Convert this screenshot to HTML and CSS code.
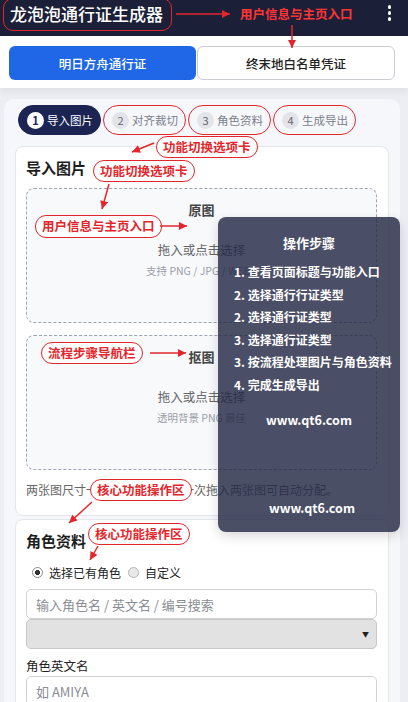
FILE: index.html
```html
<!DOCTYPE html>
<html lang="zh-CN">
<head>
  <meta charset="UTF-8">
  <meta name="viewport" content="width=device-width, initial-scale=1.0">
  <title>龙泡泡通行证生成器</title>
  <link rel="stylesheet" href="styles.css">
</head>
<body>
  <!-- Top bar -->
  <header class="topbar">
    <h1 class="app-title">龙泡泡通行证生成器</h1>
    <button class="menu-btn" aria-label="菜单"><span></span><span></span><span></span></button>
  </header>

  <!-- Pass type tabs -->
  <nav class="pass-tabs">
    <button class="pass-tab active">明日方舟通行证</button>
    <button class="pass-tab">终末地白名单凭证</button>
  </nav>

  <main class="panel">
    <!-- Step navigation -->
    <ol class="steps">
      <li class="step current"><span class="step-num">1</span>导入图片</li>
      <li class="step"><span class="step-num">2</span>对齐裁切</li>
      <li class="step"><span class="step-num">3</span>角色资料</li>
      <li class="step"><span class="step-num">4</span>生成导出</li>
    </ol>

    <section class="card">
      <h2 class="card-title">导入图片</h2>
      <div class="dropzone">
        <div class="drop-label">原图</div>
        <div class="drop-action">拖入或点击选择</div>
        <div class="drop-note">支持 PNG / JPG / WEBP</div>
      </div>
      <div class="dropzone">
        <div class="drop-label">抠图</div>
        <div class="drop-action">拖入或点击选择</div>
        <div class="drop-note">透明背景 PNG 最佳</div>
      </div>
      <p class="hint">两张图尺寸一致时效果最佳；一次拖入两张图可自动分配。</p>
    </section>

    <section class="card">
      <h2 class="card-title">角色资料</h2>
      <div class="radio-row">
        <label class="radio-label"><input type="radio" name="mode" class="radio" checked>选择已有角色</label>
        <label class="radio-label"><input type="radio" name="mode" class="radio">自定义</label>
      </div>
      <input type="text" class="field search" placeholder="输入角色名 / 英文名 / 编号搜索">
      <div class="select-wrap">
        <select class="field select"><option></option></select>
      </div>
      <label class="field-label">角色英文名</label>
      <input type="text" class="field" placeholder="如 AMIYA">
    </section>
  </main>

  <!-- Guide popup -->
  <aside class="guide">
    <h3 class="guide-title">操作步骤</h3>
    <ul class="guide-steps">
      <li>1. 查看页面标题与功能入口</li>
      <li>2. 选择通行行证类型</li>
      <li>2. 选择通行证类型</li>
      <li>3. 选择通行证类型</li>
      <li>3. 按流程处理图片与角色资料</li>
      <li>4. 完成生成导出</li>
    </ul>
    <div class="guide-site">www.qt6.com</div>
    <div class="guide-site bottom">www.qt6.com</div>
  </aside>

  <!-- Annotations -->
  <div class="title-ring"></div>
  <div class="header-note">用户信息与主页入口</div>
  <div class="note note-tabs1">功能切换选项卡</div>
  <div class="note note-tabs2">功能切换选项卡</div>
  <div class="note note-user">用户信息与主页入口</div>
  <div class="note note-flow">流程步骤导航栏</div>
  <div class="note note-core1">核心功能操作区</div>
  <div class="note note-core2">核心功能操作区</div>

  <svg class="arrows" width="408" height="702" viewBox="0 0 408 702">
    <defs>
      <marker id="ah" viewBox="0 0 10 10" refX="10" refY="5" markerWidth="9" markerHeight="8" markerUnits="userSpaceOnUse" orient="auto">
        <path d="M0 0L10 5L0 10z" fill="#e3262c"/>
      </marker>
    </defs>
    <g stroke="#e3262c" stroke-width="1.5" fill="none" marker-end="url(#ah)">
      <line x1="176" y1="14" x2="230" y2="14"/>
      <line x1="292" y1="25" x2="292" y2="48"/>
      <line x1="154" y1="143" x2="132" y2="152"/>
      <line x1="109" y1="184" x2="102" y2="209"/>
      <line x1="160" y1="226" x2="187" y2="226"/>
      <line x1="150" y1="353" x2="186" y2="353"/>
      <line x1="92" y1="502" x2="69" y2="523"/>
      <line x1="98" y1="546" x2="90" y2="560"/>
    </g>
  </svg>
</body>
</html>
```

FILE: styles.css
```css
* {
  box-sizing: border-box;
}

body {
  margin: 0;
  width: 408px;
  height: 702px;
  overflow: hidden;
  position: relative;
  background-color: #eceef3;
  font-family: "Noto Sans CJK SC", "Noto Sans", sans-serif;
  color: #222;
}

/* top bar */
.topbar {
  height: 36px;
  background-color: #1c1f38;
  display: flex;
  align-items: flex-start;
  justify-content: space-between;
  padding: 0 17px 0 10px;
}

.app-title {
  margin: 0;
  font-size: 17px;
  font-weight: 500;
  line-height: 28px;
  color: #fff;
}

.menu-btn {
  margin-top: 5px;
  padding: 0;
  border: 0;
  background: none;
  display: flex;
  flex-direction: column;
  gap: 2.5px;
}

.menu-btn span {
  width: 3.5px;
  height: 3.5px;
  border-radius: 50%;
  background-color: #fff;
}

/* pass tabs */
.pass-tabs {
  position: relative;
  background-color: #fff;
  display: flex;
  padding: 10px 13px 8px 9px;
  box-shadow: 0 3px 8px rgba(20, 30, 60, 0.07);
}

.pass-tab {
  height: 34px;
  border-radius: 6px;
  font-family: inherit;
  font-size: 12.5px;
  font-weight: 500;
}

.pass-tab.active {
  flex: 0 0 187px;
  border: 0;
  background-color: #1f67e6;
  color: #fff;
}

.pass-tab:not(.active) {
  flex: 1;
  margin-left: 1px;
  border: 1px solid #c9ccd2;
  background-color: #fff;
  color: #222;
}

/* main panel */
.panel {
  margin: 11px 8px 0 4px;
  padding: 6px 11px 20px;
  background-color: #f6f7fa;
  border-radius: 10px;
}

.steps {
  list-style: none;
  margin: 0 0 11px;
  padding: 0 0 0 3px;
  display: flex;
  gap: 2px;
}

.step {
  height: 30px;
  border-radius: 15px;
  border: 1.5px solid #e3262c;
  display: flex;
  align-items: center;
  gap: 3px;
  padding: 0 7px 0 8px;
  font-size: 11.5px;
  color: #7a7f8c;
}

.step.current {
  background-color: #1b2452;
  border-color: #1b2452;
  color: #fff;
}

.step-num {
  width: 17px;
  height: 17px;
  border-radius: 50%;
  background-color: #e2e4ea;
  color: #666;
  display: flex;
  align-items: center;
  justify-content: center;
  font-size: 11px;
}

.step.current .step-num {
  background-color: #fff;
  color: #1b2452;
  font-weight: 700;
}

.card {
  background-color: #fff;
  border: 1px solid #e4e6ec;
  border-radius: 8px;
  padding: 10px 11px 16px 10px;
}

.card + .card {
  margin-top: 3px;
}

.card-title {
  margin: 0 0 9px;
  font-size: 15px;
  line-height: 22px;
  font-weight: 700;
  color: #1e1e1e;
}

.dropzone {
  height: 135px;
  border: 1.5px dashed #9ea4b3;
  border-radius: 8px;
  background-color: #f8f9fb;
  display: flex;
  flex-direction: column;
  align-items: center;
  padding-top: 11px;
}

.dropzone + .dropzone {
  margin-top: 12px;
}

.drop-label {
  font-size: 13px;
  font-weight: 700;
  line-height: 20px;
  color: #444;
}

.drop-action {
  margin-top: 21px;
  font-size: 12.5px;
  line-height: 18px;
  color: #666;
}

.drop-note {
  margin-top: 4px;
  font-size: 10.5px;
  line-height: 16px;
  color: #9a9ea8;
}

.hint {
  margin: 11px 0 0;
  font-size: 12px;
  line-height: 18px;
  color: #666;
}

/* role form */
.radio-row {
  display: flex;
  align-items: center;
  height: 22px;
  margin-left: 6px;
  gap: 7px;
}

.radio-label {
  display: flex;
  align-items: center;
  font-size: 12px;
  color: #222;
}

.radio {
  appearance: none;
  width: 11px;
  height: 11px;
  margin: 0 6px 0 0;
  border-radius: 50%;
  border: 1px solid #b5b5b5;
  background-color: #e9e9e9;
}

.radio:checked {
  border-color: #8a8a8a;
  background: radial-gradient(circle, #333 0 2.3px, #fff 2.8px);
}

.field {
  display: block;
  width: 100%;
  height: 30px;
  border: 1px solid #cfd2d8;
  border-radius: 5px;
  padding: 0 9px;
  font-family: inherit;
  font-size: 13px;
  color: #222;
  background-color: #fff;
}

.field::placeholder {
  color: #8a8d94;
}

.search {
  margin-top: 6px;
}

.select-wrap {
  position: relative;
}

.select {
  appearance: none;
  background-color: #e2e2e2;
  border-color: #c8c8c8;
}

.select-wrap::after {
  content: "▼";
  position: absolute;
  right: 8px;
  top: 50%;
  transform: translateY(-50%);
  font-size: 7px;
  color: #222;
}

.field-label {
  display: block;
  margin: 8px 0 1px;
  font-size: 12.5px;
  line-height: 18px;
  color: #222;
}

/* guide popup */
.guide {
  position: absolute;
  left: 218px;
  top: 217px;
  width: 182px;
  height: 315px;
  border-radius: 8px;
  background-color: rgba(35, 40, 68, 0.82);
  color: #fff;
  display: flex;
  flex-direction: column;
  padding: 16px 0 13px;
  box-shadow: 0 4px 12px rgba(0, 0, 0, 0.15);
}

.guide-title {
  margin: 0 0 8px;
  text-align: center;
  font-size: 13px;
  font-weight: 700;
  line-height: 20px;
}

.guide-steps {
  list-style: none;
  margin: 0;
  padding: 0 0 0 16px;
  font-size: 12px;
  font-weight: 600;
  line-height: 22.6px;
}

.guide-site {
  margin-top: 12px;
  text-align: center;
  font-size: 12.5px;
  font-weight: 700;
  line-height: 22px;
}

.guide-site.bottom {
  margin-top: auto;
  padding-left: 6px;
}

/* annotations */
.title-ring {
  position: absolute;
  left: 3px;
  top: -2px;
  width: 169px;
  height: 33px;
  border: 1.5px solid #e3262c;
  border-radius: 10px;
}

.header-note {
  position: absolute;
  left: 240px;
  top: 5px;
  font-size: 12.5px;
  font-weight: 700;
  line-height: 18px;
  color: #ff3535;
}

.note {
  position: absolute;
  height: 22px;
  padding: 0 6px;
  border: 1.5px solid #e3262c;
  border-radius: 11px;
  background-color: #fff;
  color: #e3262c;
  font-size: 12.5px;
  font-weight: 700;
  line-height: 19px;
  white-space: nowrap;
}

.note-tabs1 { left: 156px; top: 136px; }
.note-tabs2 { left: 93px; top: 160px; }
.note-user { left: 35px; top: 215px; height: 23px; }
.note-flow { left: 41px; top: 342px; }
.note-core1 { left: 90px; top: 479px; }
.note-core2 { left: 88px; top: 523px; }

.arrows {
  position: absolute;
  left: 0;
  top: 0;
  pointer-events: none;
}
```
